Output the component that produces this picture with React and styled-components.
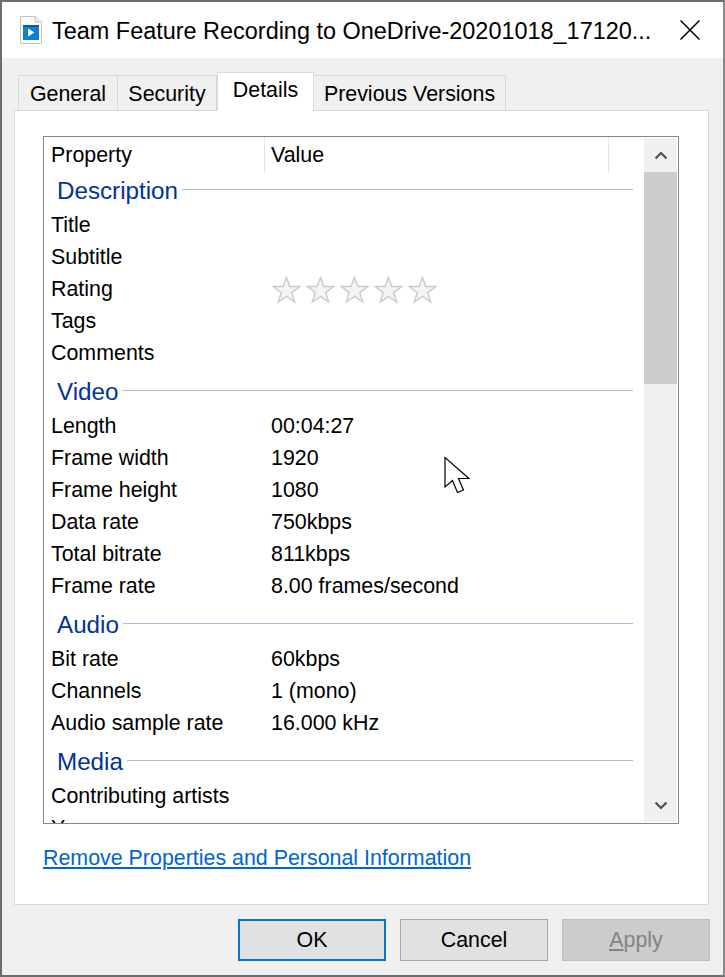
import styled, { createGlobalStyle } from "styled-components";

const GlobalStyle = createGlobalStyle`
  html, body {
    margin: 0;
    padding: 0;
    background: #ffffff;
  }
  * {
    box-sizing: border-box;
  }
`;

const Dialog = styled.div`
  position: relative;
  width: 725px;
  height: 977px;
  display: flex;
  flex-direction: column;
  overflow: hidden;
  background: #f0f0f0;
  border-top: 2px solid #6d6d6d;
  border-left: 2px solid #6d6d6d;
  border-right: 2px solid #8a8a8a;
  border-bottom: 2px solid #6d6d6d;
  font-family: "Liberation Sans", Arial, sans-serif;
  font-size: 21.4px;
  color: #000000;
`;

const TitleBar = styled.div`
  height: 56px;
  flex: none;
  display: flex;
  align-items: center;
  padding-left: 18px;
  background: #ffffff;
`;

const TitleText = styled.div`
  margin-left: 10px;
  padding-top: 2px;
  font-size: 23.45px;
  white-space: nowrap;
`;

const CloseButton = styled.div`
  margin-left: auto;
  margin-right: 23px;
  width: 20px;
  height: 20px;
  display: flex;
`;

const TabStrip = styled.div`
  height: 52px;
  flex: none;
  display: flex;
  align-items: flex-end;
  padding: 0 0 0 16px;
`;

const Tab = styled.div`
  height: ${({ $active }) => ($active ? "39px" : "35px")};
  width: ${({ $w }) => $w}px;
  margin-bottom: ${({ $active }) => ($active ? "-1px" : "0")};
  display: flex;
  justify-content: center;
  align-items: ${({ $active }) => ($active ? "flex-start" : "center")};
  padding-top: ${({ $active }) => ($active ? "5px" : "2px")};
  background: ${({ $active }) => ($active ? "#ffffff" : "#f0f0f0")};
  border: 1px solid #d9d9d9;
  border-bottom: none;
  border-left-width: ${({ $first, $active }) => ($first || $active ? "1px" : "0")};
  position: relative;
  z-index: ${({ $active }) => ($active ? 1 : 0)};
`;

const Panel = styled.div`
  width: 695px;
  height: 795px;
  margin-left: 12px;
  flex: none;
  padding: 25px 28px 0;
  background: #ffffff;
  border: 1px solid #d9d9d9;
`;

const ListBox = styled.div`
  width: 636px;
  height: 688px;
  display: flex;
  border: 1px solid #828790;
`;

const ListBody = styled.div`
  flex: 1;
  min-width: 0;
  overflow: hidden;
`;

const HeaderRow = styled.div`
  height: 36px;
  display: grid;
  grid-template-columns: 221px 344px;
`;

const HeaderCell = styled.div`
  display: flex;
  align-items: center;
  padding-left: ${({ $first }) => ($first ? "7px" : "6px")};
  border-right: 1px solid #e5e5e5;
`;

const Group = styled.div`
  & + & {
    margin-top: 5px;
  }
`;

const GroupHeading = styled.div`
  height: 36px;
  display: flex;
  align-items: center;
  gap: 4px;
  padding: 0 11px 0 13px;
  color: #003399;
  font-size: 24.2px;
  &::after {
    content: "";
    flex: 1;
    height: 1px;
    margin-top: -4px;
    background: #b4b9d8;
  }
`;

const Row = styled.div`
  height: 32px;
  display: grid;
  grid-template-columns: 220px 1fr;
  align-items: center;
  padding-left: 7px;
  white-space: nowrap;
`;

const Stars = styled.div`
  display: flex;
  gap: 5px;
  margin: 2px 0 0 1px;
`;

const Scrollbar = styled.div`
  width: 33px;
  flex: none;
  margin: 1px 1px 1px 0;
  display: flex;
  flex-direction: column;
  background: #f0f0f0;
`;

const ScrollArrow = styled.div`
  height: 34px;
  flex: none;
  display: flex;
  align-items: center;
  justify-content: center;
`;

const ScrollThumb = styled.div`
  height: 212px;
  flex: none;
  background: #cdcdcd;
`;

const ScrollSpacer = styled.div`
  flex: 1;
`;

const RemoveLink = styled.a`
  display: inline-block;
  margin-top: 22px;
  color: #0066cc;
  text-decoration: underline;
`;

const Footer = styled.div`
  flex: 1;
  display: flex;
  justify-content: flex-end;
  gap: 14px;
  padding: 14px 13px 0 0;
`;

const Button = styled.div`
  width: 148px;
  height: 42px;
  display: flex;
  align-items: center;
  justify-content: center;
  background: ${({ $disabled }) => ($disabled ? "#cccccc" : "#e1e1e1")};
  color: ${({ $disabled }) => ($disabled ? "#838383" : "#000000")};
  border: ${({ $primary, $disabled }) =>
    $primary
      ? "2px solid #0078d7"
      : `1px solid ${$disabled ? "#bfbfbf" : "#a6a6a6"}`};
`;

const Cursor = styled.svg`
  position: absolute;
  left: 442px;
  top: 454px;
`;

const FileIcon = () => (
  <svg width="22" height="28" viewBox="0 0 22 28">
    <path d="M0.5 0.5H15L21.5 6V27.5H0.5Z" fill="#ffffff" stroke="#c9c3b4" />
    <path d="M15 0.5V6H21.5" fill="#eeeeee" stroke="#c9c3b4" />
    <rect x="3" y="9" width="16" height="15" fill="#0f7fd0" />
    <rect x="3" y="9" width="16" height="2" fill="#0a5a9c" />
    <path d="M8 12.5L14.5 16.5L8 20.5Z" fill="#ffffff" />
  </svg>
);

const Star = () => (
  <svg width="29" height="28" viewBox="0 0 29 28">
    <path
      d="M14.5 1.5L17.9 10.6H27.6L19.8 16.6L22.6 26L14.5 20.4L6.4 26L9.2 16.6L1.4 10.6H11.1Z"
      fill="#f4f4f4"
      stroke="#cccccc"
      strokeWidth="1.5"
    />
  </svg>
);

const groups = [
  {
    name: "Description",
    rows: [["Title"], ["Subtitle"], ["Rating", "stars"], ["Tags"], ["Comments"]],
  },
  {
    name: "Video",
    rows: [
      ["Length", "00:04:27"],
      ["Frame width", "1920"],
      ["Frame height", "1080"],
      ["Data rate", "750kbps"],
      ["Total bitrate", "811kbps"],
      ["Frame rate", "8.00 frames/second"],
    ],
  },
  {
    name: "Audio",
    rows: [
      ["Bit rate", "60kbps"],
      ["Channels", "1 (mono)"],
      ["Audio sample rate", "16.000 kHz"],
    ],
  },
  {
    name: "Media",
    rows: [["Contributing artists"], ["Year"]],
  },
];

const App = () => (
  <>
    <GlobalStyle />
    <Dialog>
      <TitleBar>
        <FileIcon />
        <TitleText>Team Feature Recording to OneDrive-20201018_17120...</TitleText>
        <CloseButton>
          <svg width="20" height="20" viewBox="0 0 20 20">
            <path d="M0.5 0.5L19.5 19.5M19.5 0.5L0.5 19.5" stroke="#000000" strokeWidth="1.5" />
          </svg>
        </CloseButton>
      </TitleBar>
      <TabStrip>
        <Tab $first $w={100}>General</Tab>
        <Tab $w={99}>Security</Tab>
        <Tab $active $w={97}>Details</Tab>
        <Tab $w={192}>Previous Versions</Tab>
      </TabStrip>
      <Panel>
        <ListBox>
          <ListBody>
            <HeaderRow>
              <HeaderCell $first>Property</HeaderCell>
              <HeaderCell>Value</HeaderCell>
            </HeaderRow>
            {groups.map((group) => (
              <Group key={group.name}>
                <GroupHeading>{group.name}</GroupHeading>
                {group.rows.map(([label, value]) => (
                  <Row key={label}>
                    <span>{label}</span>
                    {value === "stars" ? (
                      <Stars>
                        <Star />
                        <Star />
                        <Star />
                        <Star />
                        <Star />
                      </Stars>
                    ) : (
                      <span>{value}</span>
                    )}
                  </Row>
                ))}
              </Group>
            ))}
          </ListBody>
          <Scrollbar>
            <ScrollArrow>
              <svg width="14" height="9" viewBox="0 0 14 9">
                <path d="M1.5 7.5L7 2L12.5 7.5" fill="none" stroke="#505050" strokeWidth="2.2" />
              </svg>
            </ScrollArrow>
            <ScrollThumb />
            <ScrollSpacer />
            <ScrollArrow>
              <svg width="14" height="9" viewBox="0 0 14 9">
                <path d="M1.5 1.5L7 7L12.5 1.5" fill="none" stroke="#505050" strokeWidth="2.2" />
              </svg>
            </ScrollArrow>
          </Scrollbar>
        </ListBox>
        <RemoveLink>Remove Properties and Personal Information</RemoveLink>
      </Panel>
      <Footer>
        <Button $primary>OK</Button>
        <Button>Cancel</Button>
        <Button $disabled><u>A</u>pply</Button>
      </Footer>
      <Cursor width="28" height="42" viewBox="0 0 28 42">
        <path
          d="M1 1.5V31L8.5 24.5L13.5 36.5L19.5 34L14.5 22.5H25Z"
          fill="#ffffff"
          stroke="#000000"
          strokeWidth="1.2"
        />
      </Cursor>
    </Dialog>
  </>
);

export default App;
